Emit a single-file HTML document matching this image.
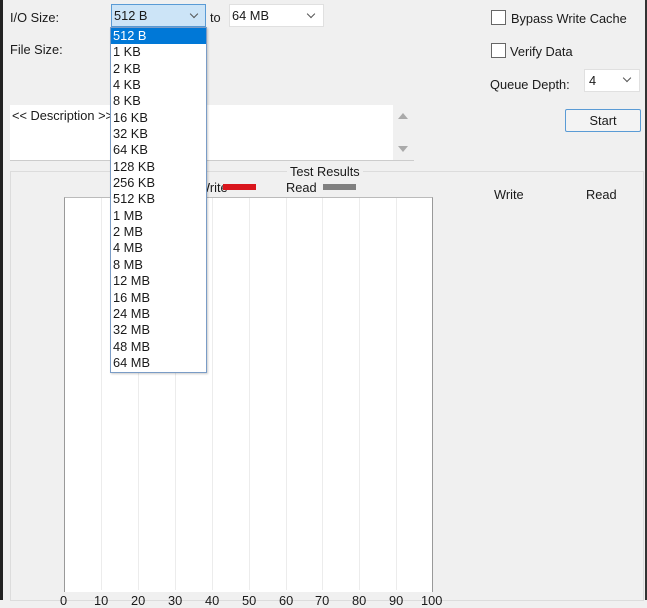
<!DOCTYPE html>
<html><head><style>
*{margin:0;padding:0;box-sizing:border-box}
body{width:647px;height:600px;overflow:hidden;background:#f0f0f0;font-family:"Liberation Sans",sans-serif;font-size:12.8px;color:#1a1a1a;position:relative}
.a{position:absolute;white-space:nowrap}
.cb{position:absolute;width:15px;height:15px;border:1px solid #555;background:#fff}
.sel{position:absolute;background:#fff;border:1px solid #d0d0d0}
.chev{position:absolute;width:6px;height:6px;border-right:1px solid #555;border-bottom:1px solid #555;transform:rotate(45deg)}
.gl{position:absolute;top:198px;height:392px;width:1px;background:#ececec}
.li{height:16.35px;line-height:16px;padding-left:2px;font-size:12.8px}
</style></head><body>
<div class="a" style="left:0;top:0;width:3px;height:600px;background:#222"></div>
<div class="a" style="left:645px;top:0;width:2px;height:600px;background:#333"></div>

<div class="a" style="left:10px;top:10px">I/O Size:</div>
<div class="a" style="left:10px;top:42px">File Size:</div>

<div class="a" style="left:111px;top:4px;width:95px;height:23px;background:#cce4f7;border:1px solid #5a9bd5"></div>
<div class="a" style="left:114px;top:8px">512 B</div>
<div class="chev" style="left:191px;top:11px"></div>
<div class="a" style="left:210px;top:10px">to</div>
<div class="sel" style="left:229px;top:4px;width:95px;height:23px;background:#fff;border-color:#e0e0e0"></div>
<div class="a" style="left:232px;top:8px">64 MB</div>
<div class="chev" style="left:308px;top:11px"></div>

<div class="cb" style="left:491px;top:10px;border-color:#666"></div>
<div class="a" style="left:511px;top:11px">Bypass Write Cache</div>
<div class="cb" style="left:491px;top:43px;border-color:#666"></div>
<div class="a" style="left:510px;top:44px">Verify Data</div>
<div class="a" style="left:490px;top:77px">Queue Depth:</div>
<div class="sel" style="left:584px;top:69px;width:56px;height:23px;border-color:#e0e0e0"></div>
<div class="a" style="left:589px;top:73px">4</div>
<div class="chev" style="left:624px;top:75px"></div>
<div class="a" style="left:565px;top:109px;width:76px;height:23px;border:1px solid #5a9bd5;background:#f3f3f3;border-radius:2px;text-align:center;line-height:21px">Start</div>

<div class="a" style="left:10px;top:105px;width:383px;height:55px;background:#fff"></div>
<div class="a" style="left:12px;top:108px">&lt;&lt; Description &gt;&gt;</div>
<div class="a" style="left:398px;top:113px;width:0;height:0;border-left:5px solid transparent;border-right:5px solid transparent;border-bottom:6px solid #aaa"></div>
<div class="a" style="left:398px;top:146px;width:0;height:0;border-left:5px solid transparent;border-right:5px solid transparent;border-top:6px solid #aaa"></div>
<div class="a" style="left:10px;top:160px;width:404px;height:1px;background:#ccc"></div>

<div class="a" style="left:10px;top:171px;width:634px;height:430px;border:1px solid #dcdcdc"></div>
<div class="a" style="left:287px;top:164px;padding:0 3px;background:#f0f0f0">Test Results</div>
<div class="a" style="left:198px;top:180px">Write</div>
<div class="a" style="left:223px;top:184px;width:33px;height:6px;background:#d9161d"></div>
<div class="a" style="left:286px;top:180px">Read</div>
<div class="a" style="left:323px;top:184px;width:33px;height:6px;background:#808080"></div>
<div class="a" style="left:494px;top:187px">Write</div>
<div class="a" style="left:586px;top:187px">Read</div>

<div class="a" style="left:64px;top:197px;width:369px;height:395px;background:#fff;border-left:1px solid #999;border-top:1px solid #bbb;border-right:1px solid #999"></div>
<div class="gl" style="left:101px"></div><div class="gl" style="left:138px"></div><div class="gl" style="left:175px"></div><div class="gl" style="left:212px"></div><div class="gl" style="left:249px"></div><div class="gl" style="left:286px"></div><div class="gl" style="left:322px"></div><div class="gl" style="left:359px"></div><div class="gl" style="left:396px"></div>
<div class="a" style="left:60px;top:593px">0</div>
<div class="a" style="left:94px;top:593px">10</div>
<div class="a" style="left:131px;top:593px">20</div>
<div class="a" style="left:168px;top:593px">30</div>
<div class="a" style="left:205px;top:593px">40</div>
<div class="a" style="left:242px;top:593px">50</div>
<div class="a" style="left:279px;top:593px">60</div>
<div class="a" style="left:315px;top:593px">70</div>
<div class="a" style="left:352px;top:593px">80</div>
<div class="a" style="left:389px;top:593px">90</div>
<div class="a" style="left:421px;top:593px">100</div>

<div class="a" style="left:110px;top:27px;width:97px;height:346px;background:#fff;border:1px solid #7a9cc6;box-shadow:1px 1px 2px rgba(0,0,0,.2)">
<div class="li" style="background:#0078d7;color:#fff">512 B</div>
<div class="li">1 KB</div><div class="li">2 KB</div><div class="li">4 KB</div><div class="li">8 KB</div><div class="li">16 KB</div><div class="li">32 KB</div><div class="li">64 KB</div><div class="li">128 KB</div><div class="li">256 KB</div><div class="li">512 KB</div><div class="li">1 MB</div><div class="li">2 MB</div><div class="li">4 MB</div><div class="li">8 MB</div><div class="li">12 MB</div><div class="li">16 MB</div><div class="li">24 MB</div><div class="li">32 MB</div><div class="li">48 MB</div><div class="li">64 MB</div>
</div>
</body></html>
